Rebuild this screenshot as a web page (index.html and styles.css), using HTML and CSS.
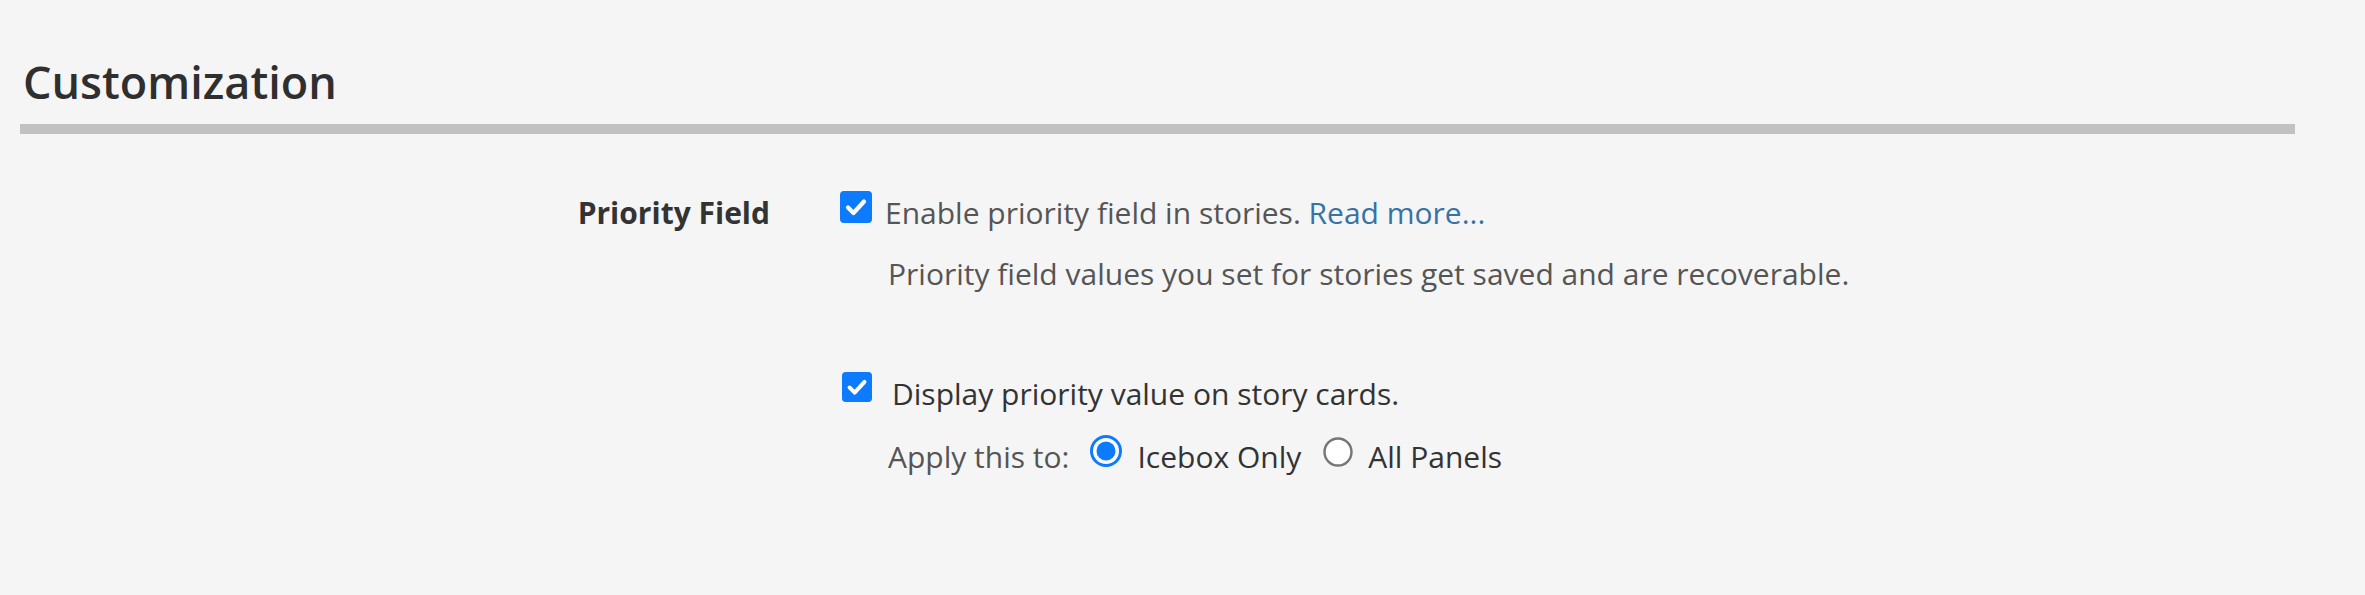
FILE: index.html
```html
<!DOCTYPE html>
<html lang="en">
<head>
<meta charset="utf-8">
<title>Customization</title>
<link rel="stylesheet" href="styles.css">
</head>
<body>
<div class="page">
  <section class="section">
    <h2 class="section-title">Customization</h2>
    <div class="setting-row">
      <div class="setting-label">Priority Field</div>
      <div class="setting-controls">
        <label class="check-line">
          <span class="checkbox">
            <svg viewBox="0 0 32 32" width="32" height="32"><rect x="0" y="0" width="32" height="32" rx="4" fill="#0d7bff"/><path d="M8 16.5 L13.5 22 L24 10.5" fill="none" stroke="#fff" stroke-width="4.2" stroke-linecap="round" stroke-linejoin="round"/></svg>
          </span>
          <span class="check-text">Enable priority field in stories. <a class="link" href="#">Read more...</a></span>
        </label>
        <p class="hint">Priority field values you set for stories get saved and are recoverable.</p>

        <label class="check-line check-line-2">
          <span class="checkbox checkbox-sm">
            <svg viewBox="0 0 32 32" width="30" height="30"><rect x="0" y="0" width="32" height="32" rx="4" fill="#0d7bff"/><path d="M8 16.5 L13.5 22 L24 10.5" fill="none" stroke="#fff" stroke-width="4.2" stroke-linecap="round" stroke-linejoin="round"/></svg>
          </span>
          <span class="check-text dark">Display priority value on story cards.</span>
        </label>
        <div class="apply-line">
          <span class="apply-label">Apply this to:</span>
          <label class="radio-option">
            <span class="radio">
              <svg viewBox="0 0 32 32" width="32" height="32"><circle cx="16" cy="16" r="14.5" fill="#fff" stroke="#0d7bff" stroke-width="3"/><circle cx="16" cy="16" r="9.5" fill="#0d7bff"/></svg>
            </span>
            <span class="radio-text">Icebox Only</span>
          </label>
          <label class="radio-option">
            <span class="radio radio-off">
              <svg viewBox="0 0 30 30" width="30" height="30"><circle cx="15" cy="15" r="13.5" fill="#fff" stroke="#767676" stroke-width="2.4"/></svg>
            </span>
            <span class="radio-text">All Panels</span>
          </label>
        </div>
      </div>
    </div>
  </section>
</div>
</body>
</html>
```

FILE: styles.css
```css
html, body {
  margin: 0;
  padding: 0;
  background: #f5f5f5;
}

body {
  font-family: "Open Sans", "Noto Sans", sans-serif;
  color: #555;
}

.page {
  padding: 0 70px 0 20px;
}

.section-title {
  margin: 0;
  padding: 55px 0 15px 3px;
  font-size: 45px;
  line-height: 54px;
  font-weight: 600;
  color: #2f2f2f;
  border-bottom: 10px solid #c1c1c1;
}

.setting-row {
  display: grid;
  grid-template-columns: 750px 1fr;
  column-gap: 70px;
  padding-top: 56px;
}

.setting-label {
  text-align: right;
  font-size: 30px;
  line-height: 45px;
  font-weight: 700;
  color: #333;
}

.setting-controls {
  display: flex;
  flex-direction: column;
  align-items: flex-start;
}

.check-line {
  display: flex;
  align-items: flex-start;
  gap: 13px;
  font-size: 30px;
  line-height: 45px;
}

.checkbox {
  display: flex;
  margin-top: 1px;
}

.check-line-2 {
  margin-top: 75px;
  gap: 20px;
  padding-left: 2px;
}

.checkbox-sm {
  margin-top: 1px;
}

.check-text {
  color: #555;
}

.check-text.dark {
  color: #333;
}

.link {
  color: #3572a6;
  text-decoration: none;
}

.hint {
  margin: 16px 0 0 48px;
  font-size: 30px;
  line-height: 45px;
  color: #555;
}

.apply-line {
  display: flex;
  align-items: flex-start;
  margin: 18px 0 0 48px;
  font-size: 30px;
  line-height: 45px;
}

.apply-label {
  color: #555;
  margin-right: 21px;
}

.radio-option {
  display: flex;
  align-items: flex-start;
  gap: 15px;
  margin-right: 22px;
  color: #333;
}

.radio {
  display: flex;
  margin-top: 1px;
}

.radio-off {
  margin-top: 3px;
}
```
